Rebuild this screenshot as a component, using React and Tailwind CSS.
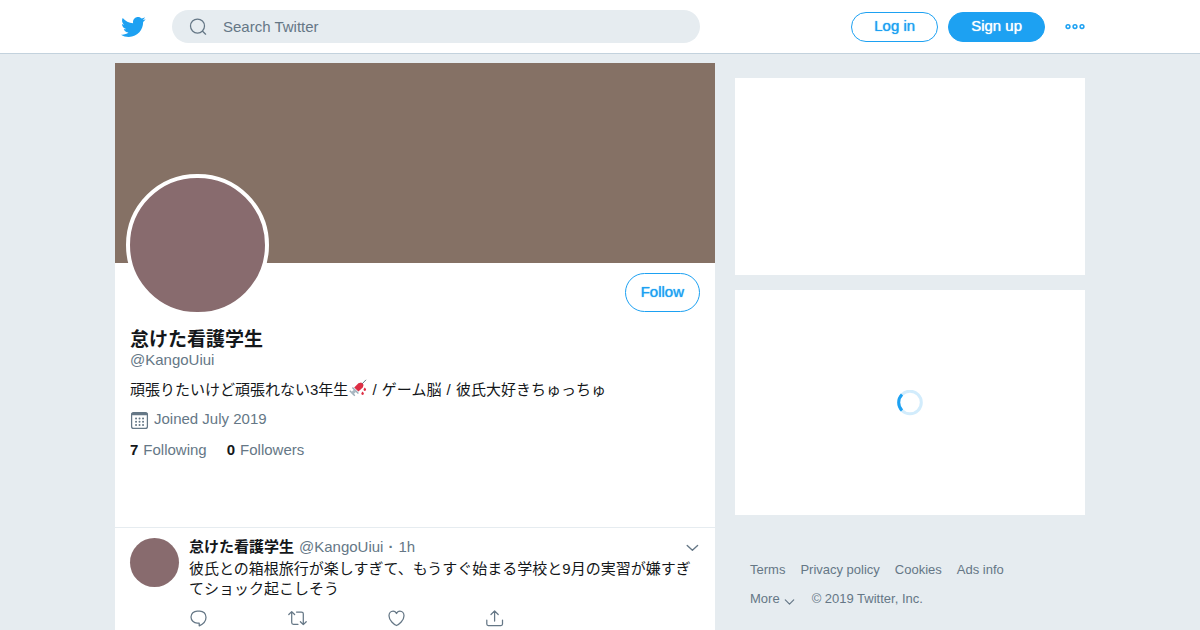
import React from "react";

function Icon({ className, children, viewBox = "0 0 20 20" }) {
  return (
    <svg
      viewBox={viewBox}
      className={className}
      fill="none"
      stroke="currentColor"
      strokeWidth="1.25"
      strokeLinecap="round"
      strokeLinejoin="round"
      aria-hidden="true"
    >
      {children}
    </svg>
  );
}

function Bird() {
  return (
    <svg viewBox="0 0 24 24" className="size-[26px]" fill="currentColor" aria-hidden="true">
      <path d="M23.643 4.937c-.835.37-1.732.62-2.675.733.962-.576 1.7-1.49 2.048-2.578-.9.534-1.897.922-2.958 1.13-.85-.904-2.06-1.47-3.4-1.47-2.572 0-4.658 2.086-4.658 4.66 0 .364.042.718.12 1.06-3.873-.195-7.304-2.05-9.602-4.868-.4.69-.63 1.49-.63 2.342 0 1.616.823 3.043 2.072 3.878-.764-.025-1.482-.234-2.11-.583v.06c0 2.257 1.605 4.14 3.737 4.568-.392.106-.803.162-1.227.162-.3 0-.593-.028-.877-.082.593 1.85 2.313 3.198 4.352 3.234-1.595 1.25-3.604 1.995-5.786 1.995-.376 0-.747-.022-1.112-.065 2.062 1.323 4.51 2.093 7.14 2.093 8.57 0 13.255-7.098 13.255-13.254 0-.2-.005-.402-.014-.602.91-.658 1.7-1.477 2.323-2.41z" />
    </svg>
  );
}

function Syringe() {
  return (
    <svg viewBox="0 0 18 18" className="mx-px inline-block size-[18px] align-[-2px]" role="img" aria-label="syringe">
      <path d="M12.500 5.500 17 .8" stroke="#66757f" strokeWidth="1" />
      <path d="m5.200 8.600 4.200-4.400 2.800-.8 2.400 2.400-.8 2.600-4.400 4.200z" fill="#dd2e44" />
      <path d="m3.400 8.400 6 6M.8 11.800l5 5" stroke="#99aab5" strokeWidth="1.400" />
      <path d="m6.600 11.200-3.600 3.400" stroke="#aab8c2" strokeWidth="3" />
      <path d="M15.800 8.400c.9 1 1.300 1.600 1.300 2.200a1.300 1.300 0 0 1-2.600 0c0-.6.400-1.200 1.300-2.200zM13.600 12.400c.9 1 1.300 1.600 1.300 2.200a1.300 1.300 0 0 1-2.600 0c0-.6.400-1.200 1.300-2.200z" fill="#dd2e44" />
    </svg>
  );
}

function PillButton({ children, className }) {
  return (
    <button
      type="button"
      className={`rounded-full border border-[#1da1f2] text-[15px] [text-shadow:0_0_1px_currentColor] ${className}`}
    >
      {children}
    </button>
  );
}

function Header() {
  return (
    <header className="border-b border-[#c3d2dd] bg-white">
      <div className="mx-auto flex h-[53px] max-w-[970px] items-center gap-5">
        <div className="min-w-0 flex-[600]">
          <div className="flex items-center gap-[26px] pl-[5px] pr-[15px]">
            <a href="#home" aria-label="Twitter" className="shrink-0 text-[#1da1f2]">
              <Bird />
            </a>
            <label className="flex h-[33px] min-w-0 flex-1 items-center gap-[15px] rounded-full bg-[#e6ecf0] pl-4 text-[#657786]">
              <Icon className="size-5 shrink-0">
                <circle cx="9.500" cy="9" r="7" />
                <path d="m14.600 14.200 3 3" />
              </Icon>
              <input
                type="text"
                aria-label="Search Twitter"
                placeholder="Search Twitter"
                className="min-w-0 flex-1 bg-transparent pt-px text-[15px] outline-none placeholder:text-[#657786]"
              />
            </label>
          </div>
        </div>
        <div className="flex flex-[350] items-center justify-end">
          <PillButton className="h-[30px] px-[22px] text-[#1da1f2]">Log in</PillButton>
          <PillButton className="ml-[10px] h-[30px] bg-[#1da1f2] px-[22px] text-white">Sign up</PillButton>
          <button type="button" aria-label="More options" className="ml-5 text-[#1da1f2]">
            <Icon className="size-5">
              <circle cx="3" cy="9.600" r="1.900" strokeWidth="1.500" />
              <circle cx="10" cy="9.600" r="1.900" strokeWidth="1.500" />
              <circle cx="17" cy="9.600" r="1.900" strokeWidth="1.500" />
            </Icon>
          </button>
        </div>
      </div>
    </header>
  );
}

function Profile() {
  return (
    <section className="h-[465px] border-b border-[#e6ecf0]">
      <div className="h-[200px] bg-[#857165]" />
      <div className="px-[15px]">
        <div className="flex items-start justify-between pt-[10px]">
          <div className="-ml-1 -mt-[99px] h-[142px] w-[143px] rounded-full border-4 border-white bg-[#886b6e]" />
          <PillButton className="h-[39px] px-[15px] text-[#1da1f2]">Follow</PillButton>
        </div>
        <h1 className="mt-[14px] text-[19px] font-bold leading-5">怠けた看護学生</h1>
        <p className="text-[15px] leading-5 text-[#657786]">@KangoUiui</p>
        <p className="mt-[9px] text-[15px] leading-5">
          頑張りたいけど頑張れない3年生
          <Syringe /> <span className="mr-px">/</span> ゲーム脳 <span className="mx-px">/</span> 彼氏大好きちゅっちゅ
        </p>
        <p className="mt-[7px] flex items-center gap-[5px] text-[15px] leading-5 text-[#657786]">
          <Icon className="mt-1 size-[19px]" viewBox="0 0 19 19">
            <rect x="1.600" y="1.600" width="15.800" height="15.800" rx="2" />
            <path d="M2.600 3h13.800" strokeWidth="2.400" />
            <path d="M6 7.500h.1M9.500 7.500h.1M13 7.500h.1M6 10.700h.1M9.500 10.700h.1M13 10.700h.1M6 14h.1M9.500 14h.1M13 14h.1" strokeWidth="1.900" />
          </Icon>
          Joined July 2019
        </p>
        <p className="mt-[10px] flex gap-5 text-[15px] leading-5 text-[#657786]">
          <a href="#following" className="flex gap-[5px]"><b className="text-[#14171a]">7</b>Following</a>
          <a href="#followers" className="flex gap-[5px]"><b className="text-[#14171a]">0</b>Followers</a>
        </p>
      </div>
    </section>
  );
}

function Tweet() {
  return (
    <article className="flex gap-[10px] px-[15px] pt-[10px]">
      <div className="size-[49px] shrink-0 rounded-full bg-[#886b6e]" />
      <div className="min-w-0 flex-1 text-[15px] leading-5">
        <div className="-mt-px flex items-center">
          <b>怠けた看護学生</b>
          <span className="ml-[5px] text-[#657786]">@KangoUiui</span>
          <span className="mx-[5px] font-bold text-[#657786]">·</span>
          <span className="text-[#657786]">1h</span>
          <button type="button" aria-label="Tweet options" className="ml-auto text-[#657786]">
            <Icon className="size-4"><path d="m4 8 6.500 6 6.500-6" strokeWidth="1.700" /></Icon>
          </button>
        </div>
        <p className="mt-[2px]">
          彼氏との箱根旅行が楽しすぎて、もうすぐ始まる学校と9月の実習が嫌すぎてショック起こしそう
        </p>
        <div className="mt-[9px] grid max-w-[395px] grid-cols-4 text-[#657786]">
          <button type="button" aria-label="Reply">
            <Icon className="size-5">
              <path d="M10.200 15v2.800C14.500 16 17 13 17 9.300 17 5.700 14.300 3 10.800 3H8.200C4.800 3 2 5.700 2 9s2.800 6 6.200 6z" />
            </Icon>
          </button>
          <button type="button" aria-label="Retweet">
            <Icon className="size-5">
              <path d="m.8 6.500 2.900-2.900 2.900 2.900M3.700 3.800v10.700q0 1.800 1.800 1.800h4.500M8.500 4h5q1.800 0 1.800 1.800v10.700M12.400 13.700l2.900 2.900 2.900-2.900" />
            </Icon>
          </button>
          <button type="button" aria-label="Like">
            <Icon className="size-5">
              <path d="M9.500 17.500C7 16.500 2 12.500 2 7.700 2 5 3.800 3 6.100 3 7.900 3 9 4.200 9.500 5.500 10 4.200 11.100 3 12.900 3c2.300 0 4.100 2 4.100 4.700 0 4.800-5 8.800-7.500 9.800z" />
            </Icon>
          </button>
          <button type="button" aria-label="Share">
            <Icon className="size-5">
              <path d="M1.800 12v4q0 1.500 1.500 1.500h12.700q1.500 0 1.500-1.500v-4M9.600 13V3M6 6.500 9.600 2.900l3.600 3.600" />
            </Icon>
          </button>
        </div>
      </div>
    </article>
  );
}

function Sidebar() {
  return (
    <aside className="min-w-0 flex-[350] pt-[15px]">
      <div className="h-[197px] bg-white" />
      <div className="mt-[15px] flex h-[225px] items-center justify-center bg-white">
        <svg viewBox="0 0 26 26" className="size-[26px]" fill="none" stroke="#1da1f2" strokeWidth="3" role="img" aria-label="Loading">
          <circle cx="13" cy="12.500" r="11.300" opacity="0.2" />
          <path d="M5 20.500A11.300 11.300 0 0 1 5 4.500" />
        </svg>
      </div>
      <footer className="flex flex-wrap gap-x-4 gap-y-[9px] px-[15px] pt-[45px] text-[13px] leading-5 text-[#657786]">
        <nav className="flex w-full gap-[15px]">
          <a href="#terms">Terms</a>
          <a href="#privacy">Privacy policy</a>
          <a href="#cookies">Cookies</a>
          <a href="#ads">Ads info</a>
        </nav>
        <button type="button" className="flex items-center gap-[3px]">
          More
          <Icon className="mt-[7px] size-[13px]"><path d="m3.500 6 6.500 6.500 6.500-6.500" strokeWidth="1.800" /></Icon>
        </button>
        <span>© 2019 Twitter, Inc.</span>
      </footer>
    </aside>
  );
}

export default function App() {
  return (
    <div
      lang="ja"
      className="h-screen overflow-hidden bg-[#e6ecf0] font-['Liberation_Sans','Noto_Sans_CJK_JP',sans-serif] text-[#14171a]"
    >
      <Header />
      <div className="mx-auto flex max-w-[970px] items-start gap-5 pt-[9px]">
        <main className="min-h-screen min-w-0 flex-[600] bg-white">
          <Profile />
          <Tweet />
        </main>
        <Sidebar />
      </div>
    </div>
  );
}
